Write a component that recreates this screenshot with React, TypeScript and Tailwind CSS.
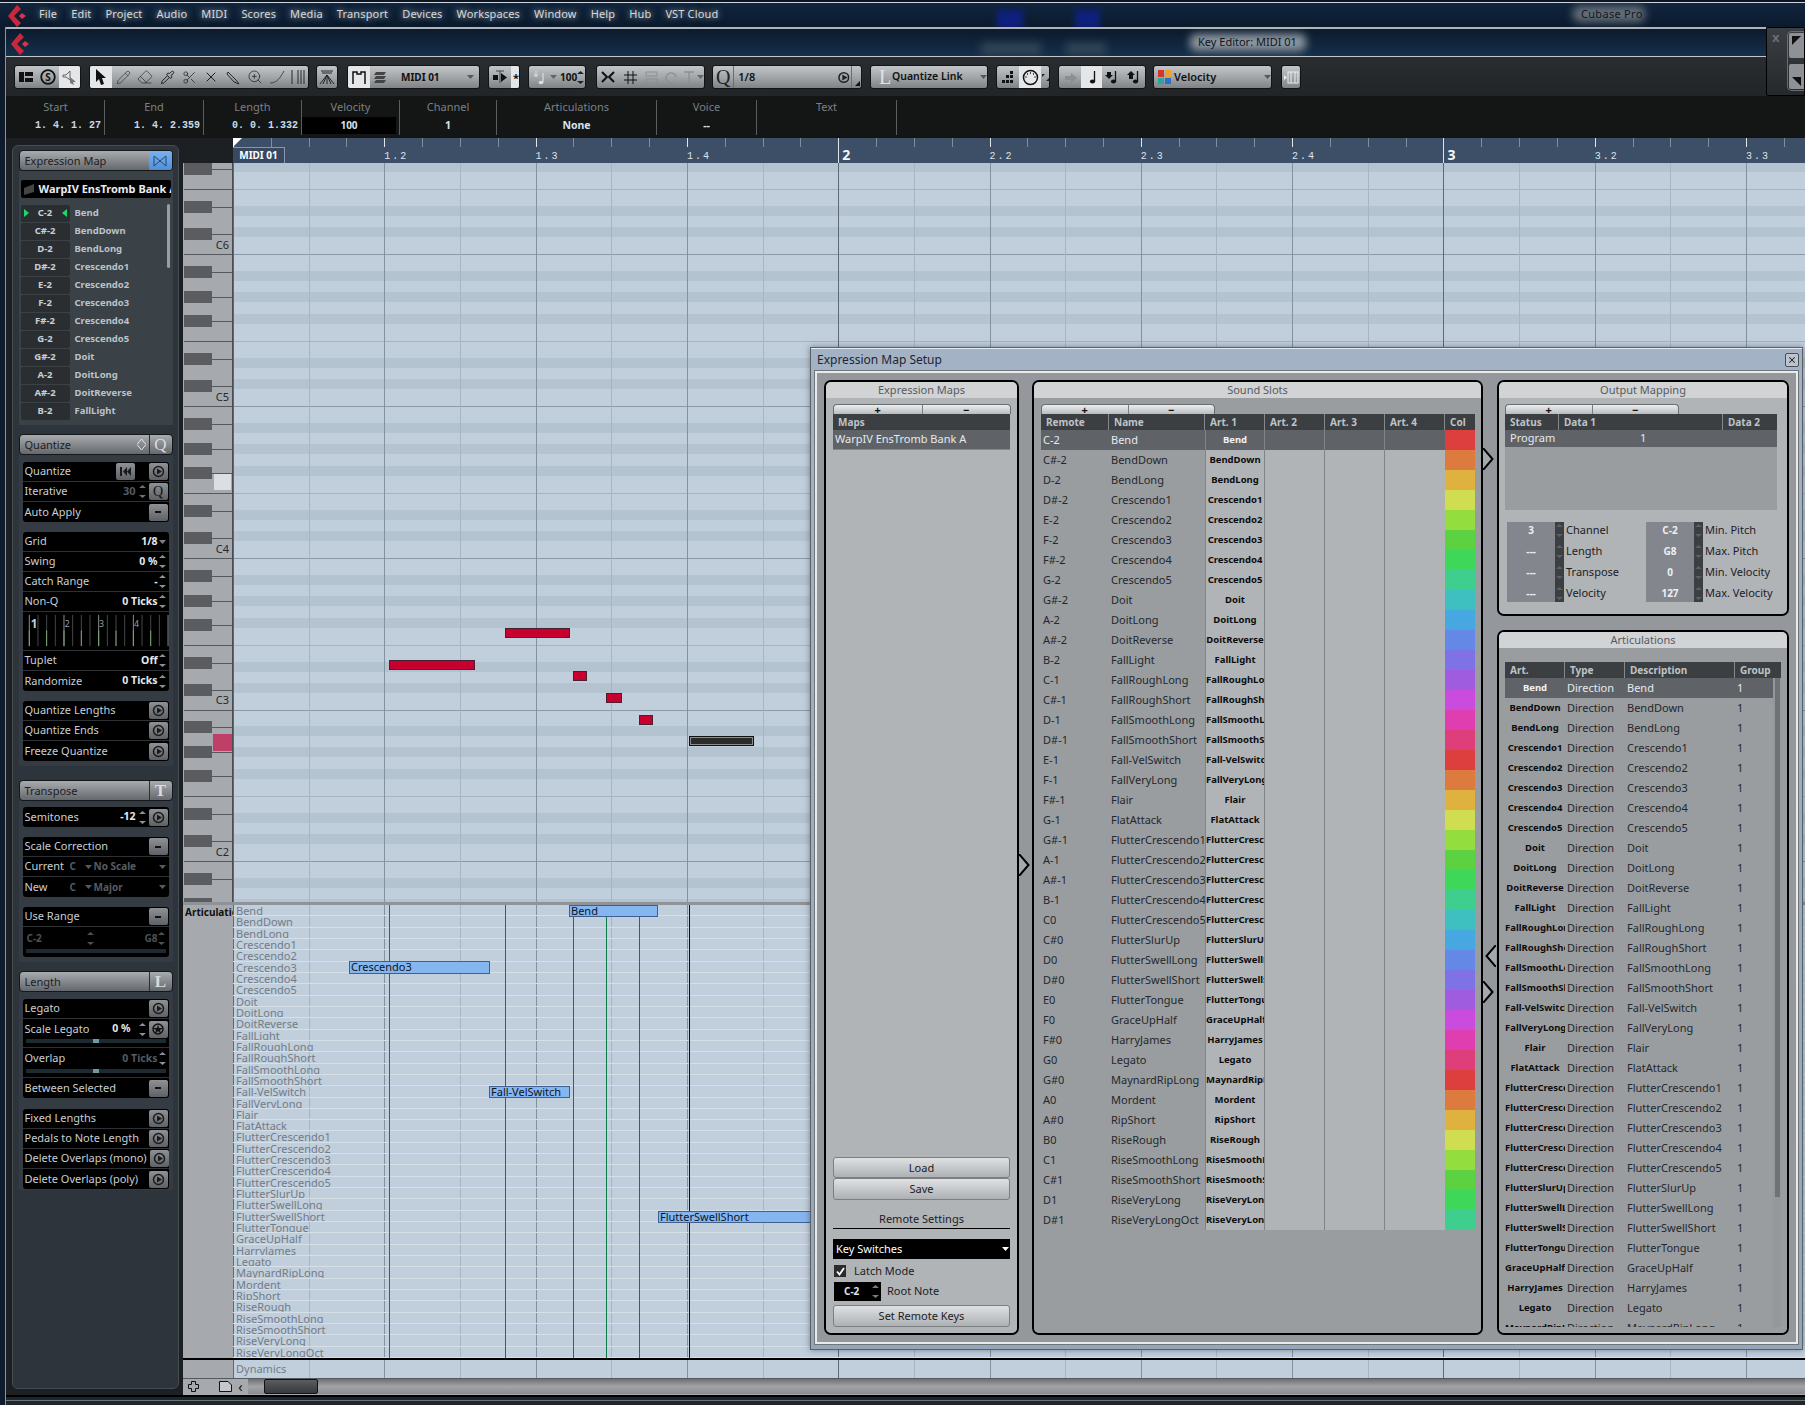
import type { ReactNode } from 'react'
import { Eraser, Pencil, Pipette, Scissors, X, ZoomIn } from 'lucide-react'

const NOTES = ['C', 'C#', 'D', 'D#', 'E', 'F', 'F#', 'G', 'G#', 'A', 'A#', 'B']
const REMOTES = Array.from({ length: 40 }, (_, i) => NOTES[i % 12] + (Math.floor(i / 12) - 2))

const SLOTS = [
  'Bend', 'BendDown', 'BendLong', 'Crescendo1', 'Crescendo2', 'Crescendo3', 'Crescendo4', 'Crescendo5',
  'Doit', 'DoitLong', 'DoitReverse', 'FallLight', 'FallRoughLong', 'FallRoughShort', 'FallSmoothLong',
  'FallSmoothShort', 'Fall-VelSwitch', 'FallVeryLong', 'Flair', 'FlatAttack', 'FlutterCrescendo1',
  'FlutterCrescendo2', 'FlutterCrescendo3', 'FlutterCrescendo4', 'FlutterCrescendo5', 'FlutterSlurUp',
  'FlutterSwellLong', 'FlutterSwellShort', 'FlutterTongue', 'GraceUpHalf', 'HarryJames', 'Legato',
  'MaynardRipLong', 'Mordent', 'RipShort', 'RiseRough', 'RiseSmoothLong', 'RiseSmoothShort', 'RiseVeryLong',
  'RiseVeryLongOct',
]

const COLORS = [
  '#dd3e3e', '#dd7a3e', '#dfb13f', '#d1dd50', '#93dd3e', '#5cd142', '#3ed75a', '#3ecf8e',
  '#3ec0c0', '#47a7e0', '#6488e5', '#7e72e6', '#a05cdf', '#c94cdf', '#de3eb0', '#de3e7a',
]

const MENU = ['File', 'Edit', 'Project', 'Audio', 'MIDI', 'Scores', 'Media', 'Transport', 'Devices', 'Workspaces', 'Window', 'Help', 'Hub', 'VST Cloud']
const C_LINES = [102.6, 254.3, 406, 557.8, 709.5, 861.3, 1013]
const STEP = 75.65

function Logo({ className }: { className: string }) {
  return (
    <svg className={className} width="20" height="22" viewBox="0 0 20 22">
      <path d="M9 0 L0 11 L9 22 L13 18 L6 11 L13 4 Z" fill="#c9283c" />
      <path d="M14 8 L18 11 L14 14 L11 11 Z" fill="#d8344a" />
    </svg>
  )
}

function MenuBar() {
  return (
    <div className="relative flex h-[27px] shrink-0 items-center overflow-hidden border-t-2 border-t-[#0b1524] bg-linear-to-b from-[#12263f] to-[#0b1a2d] shadow-[inset_0_1px_0_#cfd6dc]">
      <div className="absolute left-[997px] top-[8px] h-[19px] w-[26px] bg-[#0e2080] blur-[3px]" />
      <div className="absolute left-[1075px] top-[8px] h-[19px] w-[25px] bg-[#0e2080] blur-[3px]" />
      <Logo className="absolute left-[8px] top-[3px]" />
      <div className="relative flex pl-[39px] text-[11px] tracking-[0.15px] text-[#d5dade] [text-shadow:0_0_4px_#5f6973,0_0_7px_#5f6973,0_0_9px_#5f6973]">
        {MENU.map((item) => (
          <span key={item} className="mr-[14px]">{item}</span>
        ))}
      </div>
      <div className="absolute left-[1573px] top-[4px] h-[16px] w-[72px] rounded-[6px] bg-[#66707a] blur-[4px]" />
      <span className="absolute left-[1581px] text-[11px] tracking-[0.3px] text-[#11161b]">Cubase Pro</span>
    </div>
  )
}

function TitleBar() {
  return (
    <div className="relative h-[30px] shrink-0 overflow-hidden border-t-2 border-b border-t-[#aeb4ba] border-b-[#c2c6ca] bg-linear-to-b from-[#0c1a2c] to-[#15304b]">
      <div className="absolute left-[975px] top-[14px] h-[12px] w-[60px] bg-[#334658] blur-[4px]" />
      <div className="absolute left-[1060px] top-[14px] h-[12px] w-[40px] bg-[#334658] blur-[4px]" />
      <Logo className="absolute left-[5px] top-[4px]" />
      <div className="absolute left-[1184px] top-[5px] h-[17px] w-[116px] rounded-[6px] bg-[#8d97a1] blur-[4px]" />
      <span className="absolute left-[1192px] top-[5px] text-[11px] text-[#11161b]">Key Editor: MIDI 01</span>
    </div>
  )
}

function Group({ w, children }: { w: string; children: ReactNode }) {
  return <div className={`${w} flex h-[24px] shrink-0 items-center overflow-hidden rounded-[3px] border border-[#111315] bg-linear-to-b from-[#c2c5c8] via-[#a4a7aa] to-[#7f8286]`}>{children}</div>
}

function Slot({ w, on, children }: { w: string; on?: boolean; children?: ReactNode }) {
  return <span className={`${w} flex h-full shrink-0 items-center justify-center ${on ? 'bg-[#e4e6e8]' : ''}`}>{children}</span>
}

function Caret({ color = '#55585c' }: { color?: string }) {
  return (
    <svg width="7" height="4" viewBox="0 0 7 4" className="shrink-0">
      <path d="M0 0 L7 0 L3.5 4 Z" fill={color} />
    </svg>
  )
}

function NoteIcon({ arrow }: { arrow?: 'up' | 'down' }) {
  return (
    <svg width="16" height="16" viewBox="0 0 16 16">
      <path d="M10.5 2 V12.5" stroke="#111" strokeWidth="1.3" />
      <ellipse cx="8.5" cy="12.5" rx="2.6" ry="1.9" fill="#111" />
      {arrow === 'down' && <path d="M2 3 H6 V6 H8 L4 10 L0 6 H2 Z" fill="#111" />}
      {arrow === 'up' && <path d="M4 2 L8 6 H6 V10 H2 V6 H0 Z" fill="#111" />}
    </svg>
  )
}

function Toolbar() {
  const tool = 'text-[#26282a]'
  return (
    <div className="flex h-[39px] shrink-0 items-start bg-linear-to-b from-[#2a2d30] to-[#222528] pl-[8px] pt-[8px]">
      <div className="mr-[8px]"><Group w="w-[67px]">
        <Slot w="w-[22px]"><svg width="14" height="10" viewBox="0 0 14 10"><rect width="5" height="10" fill="#111" /><rect x="6" width="8" height="4" fill="#111" /><rect x="6" y="6" width="8" height="4" fill="#111" /></svg></Slot>
        <Slot w="w-[22px]"><svg width="16" height="16" viewBox="0 0 16 16"><circle cx="8" cy="8" r="6.8" fill="none" stroke="#111" strokeWidth="1.8" /><text x="8" y="11.5" textAnchor="middle" fontSize="10" fontWeight="700" fill="#111">S</text></svg></Slot>
        <Slot w="w-[22px]" on><svg width="16" height="16" viewBox="0 0 16 16"><path d="M1 6 H4 L8 2 V11 L4 8 H1 Z" fill="none" stroke="#666" /><path d="M8 8 L14 13 H11 L12 16 L8 14 Z" fill="#777" /></svg></Slot>
      </Group></div>
      <div className="mr-[7px]"><Group w="w-[220px]">
        <Slot w="w-[22px]" on><svg width="12" height="16" viewBox="0 0 12 16"><path d="M1 0 L11 9 H7 L9 15 L6 16 L4 10 L1 13 Z" fill="#111" /></svg></Slot>
        <Slot w="w-[22px]"><Pencil size={15} strokeWidth={1} className={tool} /></Slot>
        <Slot w="w-[22px]"><Eraser size={16} strokeWidth={1} className={tool} /></Slot>
        <Slot w="w-[22px]"><Pipette size={15} strokeWidth={1.4} className="text-[#111]" /></Slot>
        <Slot w="w-[22px]"><Scissors size={15} strokeWidth={1.2} className={tool} /></Slot>
        <Slot w="w-[22px]"><X size={16} strokeWidth={1.4} className="text-[#111]" /></Slot>
        <Slot w="w-[22px]"><svg width="15" height="15" viewBox="0 0 15 15"><path d="M2 2 L10 10 L13 14 L8 12 L1 4 Z" fill="none" stroke="#26282a" /></svg></Slot>
        <Slot w="w-[22px]"><ZoomIn size={16} strokeWidth={1.2} className={tool} /></Slot>
        <Slot w="w-[22px]"><svg width="16" height="14" viewBox="0 0 16 14"><path d="M1 13 C8 13 11 8 15 1" fill="none" stroke="#45484c" /></svg></Slot>
        <Slot w="w-[22px]"><svg width="16" height="14" viewBox="0 0 16 14"><path d="M1 0 V14 M7 0 V14 M10 0 V14 M13 0 V14" stroke="#26282a" /></svg></Slot>
      </Group></div>
      <div className="mr-[9px]"><Group w="w-[22px]">
        <Slot w="w-full"><svg width="16" height="15" viewBox="0 0 16 15"><path d="M2 1 H14 M3 3 H13" stroke="#222" /><path d="M8 5 L1 14 M8 5 L4 14 M8 5 V14 M8 5 L12 14 M8 5 L15 14" stroke="#222" /></svg></Slot>
      </Group></div>
      <div className="mr-[8px]"><Group w="w-[133px]">
        <Slot w="w-[22px]" on><svg width="14" height="13" viewBox="0 0 14 13"><path d="M1 13 V1 H5 V3 H9 V1 H13 V13" fill="none" stroke="#111" strokeWidth="1.5" /></svg></Slot>
        <Slot w="w-[20px]"><svg width="14" height="12" viewBox="0 0 14 12"><path d="M3 1 H13 L11 4 H1 Z M3 5 H13 L11 8 H1 Z M3 9 H13 L11 12 H1 Z" fill="#444" /></svg></Slot>
        <span className="ml-[11px] w-[66px] text-[10px] font-bold text-[#111]">MIDI 01</span>
        <Caret />
      </Group></div>
      <div className="mr-[8px]"><Group w="w-[32px]">
        <Slot w="w-[22px]"><svg width="16" height="16" viewBox="0 0 16 16"><path d="M4 2 H12 M8 2 V14" stroke="#444" /><rect x="1" y="6" width="5" height="5" fill="#111" /><path d="M9 4 L15 8.5 L9 13 Z" fill="#111" /></svg></Slot>
        <Slot w="w-[10px]" on><span className="text-[11px] font-bold leading-none text-[#111]">*</span></Slot>
      </Group></div>
      <div className="mr-[10px]"><Group w="w-[58px]">
        <Slot w="w-[21px]"><svg width="14" height="15" viewBox="0 0 14 15"><path d="M3 1 V6 M1 4 L3 7 L5 4" stroke="#d8dfe6" fill="none" /><path d="M10 3 V12" stroke="#d8dfe6" strokeWidth="1.2" /><ellipse cx="8" cy="12.5" rx="2.4" ry="1.8" fill="#d8dfe6" /></svg></Slot>
        <Caret color="#666" />
        <span className="ml-[3px] text-[10px] font-bold text-[#111]">100</span>
        <Spinner color="#222" />
      </Group></div>
      <div className="mr-[7px]"><Group w="w-[109px]">
        <Slot w="w-[22px]"><svg width="16" height="14" viewBox="0 0 16 14"><path d="M2 2 L7 7 L2 12 M14 2 L9 7 L14 12" fill="none" stroke="#111" strokeWidth="2" /></svg></Slot>
        <Slot w="w-[22px]"><svg width="13" height="13" viewBox="0 0 13 13"><path d="M4 0 V13 M9 0 V13 M0 4 H13 M0 9 H13" stroke="#111" /></svg></Slot>
        <Slot w="w-[20px]"><svg width="13" height="13" viewBox="0 0 13 13"><path d="M1 1 H12 V5 H1 Z M1 8 H12 V12 H1 Z" fill="none" stroke="#8c8f93" /></svg></Slot>
        <Slot w="w-[20px]"><svg width="13" height="13" viewBox="0 0 13 13"><path d="M11 6 A5 5 0 1 0 9 11" fill="none" stroke="#8c8f93" strokeWidth="1.4" /></svg></Slot>
        <Slot w="w-[16px]"><svg width="10" height="13" viewBox="0 0 10 13"><path d="M0 1 H10 M5 1 V13" stroke="#8c8f93" strokeWidth="1.4" /></svg></Slot>
        <Caret color="#666" />
      </Group></div>
      <div className="mr-[8px]"><Group w="w-[150px]">
        <span className="flex h-full w-[22px] items-center justify-center border-r border-[#6a6d70] font-['Liberation_Serif',serif] text-[20px] leading-none text-[#222]">Q</span>
        <span className="ml-[4px] w-[103px] text-[11px] font-semibold text-[#111]">1/8</span>
        <svg width="13" height="13" viewBox="0 0 13 13"><circle cx="6" cy="6.5" r="5" fill="none" stroke="#222" strokeWidth="1.6" /><path d="M4.5 3.5 L10 6.5 L4.5 9.5 Z" fill="#222" /></svg>
        <span className="ml-[1px] flex h-full w-[10px] items-end justify-end border-l border-[#6a6d70] pb-[2px] pr-[1px]"><span className="h-0 w-0 border-b-[5px] border-l-[5px] border-b-[#111] border-l-transparent" /></span>
      </Group></div>
      <div className="mr-[8px]"><Group w="w-[118px]">
        <span className="ml-[8px] w-[13px] font-['Liberation_Serif',serif] text-[20px] leading-none text-[#dfe3e6]">L</span>
        <span className="w-[88px] text-[10.5px] font-semibold text-[#111]">Quantize Link</span>
        <Caret />
      </Group></div>
      <div className="mr-[8px]"><Group w="w-[54px]">
        <Slot w="w-[22px]"><svg width="14" height="13" viewBox="0 0 14 13"><path d="M9 0 H12 V3 H9 Z M5 4 H8 V7 H5 Z M9 4 H12 V7 H9 Z M1 9 H4 V12 H1 Z M5 9 H8 V12 H5 Z M9 9 H12 V12 H9 Z" fill="#111" /></svg></Slot>
        <Slot w="w-[22px]" on><svg width="17" height="17" viewBox="0 0 17 17"><circle cx="8.5" cy="8.5" r="7" fill="none" stroke="#111" strokeWidth="1.5" /><path d="M3.5 8 h1 M5 5 h1 M8 4 h1 M11 5 h1 M12.5 8 h1" stroke="#111" strokeWidth="1.4" /></svg></Slot>
        <Slot w="w-[9px]"><svg width="7" height="7" viewBox="0 0 7 7"><path d="M0 0 L3 0 L0 3 Z M7 7 L4 7 L7 4 Z" fill="#222" /></svg></Slot>
      </Group></div>
      <div className="mr-[7px]"><Group w="w-[88px]">
        <Slot w="w-[22px]"><svg width="15" height="13" viewBox="0 0 15 13"><path d="M2 5 H8 V2 L14 7 L8 12 V9 H2 Z" fill="#8a8d91" /></svg></Slot>
        <Slot w="w-[21px]" on><NoteIcon /></Slot>
        <Slot w="w-[22px]"><NoteIcon arrow="down" /></Slot>
        <Slot w="w-[21px]"><NoteIcon arrow="up" /></Slot>
      </Group></div>
      <div className="mr-[9px]"><Group w="w-[119px]">
        <svg className="ml-[4px] mr-[3px]" width="13" height="14" viewBox="0 0 13 14"><rect width="6" height="7" fill="#d9332e" /><rect x="7" width="6" height="7" fill="#e9a22c" /><rect y="8" width="6" height="6" fill="#23a9a1" /><rect x="7" y="8" width="6" height="6" fill="#2a6fd0" /></svg>
        <span className="w-[90px] text-[11px] font-semibold text-[#111]">Velocity</span>
        <Caret />
      </Group></div>
      <Group w="w-[20px]">
        <Slot w="w-full"><svg width="15" height="13" viewBox="0 0 15 13"><path d="M0 4 L3 6.5 L0 9 Z" fill="#e8edf2" /><rect x="4" y="1" width="10" height="11" fill="none" stroke="#e8edf2" /><path d="M7 1 V12 M11 1 V12" stroke="#e8edf2" /></svg></Slot>
      </Group>
    </div>
  )
}

function InfoCol({ w, label, value, box, bold }: { w: string; label: string; value?: string; box?: boolean; bold?: boolean }) {
  return (
    <div className={`${w} mb-[3px] mt-[4px] flex flex-col border-r border-[#5a5e62]`}>
      <span className="text-center text-[11px] leading-[14px] text-[#7b8084]">{label}</span>
      {box ? (
        <span className="mr-[3px] mt-[3px] h-[17px] bg-black text-center text-[10px] font-bold leading-[17px] text-[#d6e2ec]">{value}</span>
      ) : bold ? (
        <span className="mt-[3px] text-center text-[10.5px] font-bold leading-[17px] text-[#d6e2ec]">{value}</span>
      ) : (
        <span className="mt-[3px] pr-[3px] text-right font-['Liberation_Mono',monospace] text-[10px] font-bold leading-[17px] text-[#c8dbe8]">{value}</span>
      )}
    </div>
  )
}

function InfoBar() {
  return (
    <div className="flex h-[42px] shrink-0 bg-[#141615] pl-[1px]">
      <InfoCol w="w-[98px]" label="Start" value="1. 4. 1. 27" />
      <InfoCol w="w-[99px]" label="End" value="1. 4. 2.359" />
      <InfoCol w="w-[98px]" label="Length" value="0. 0. 1.332" />
      <InfoCol w="w-[98px]" label="Velocity" value="100" box />
      <InfoCol w="w-[97px]" label="Channel" value="1" bold />
      <InfoCol w="w-[160px]" label="Articulations" value="None" bold />
      <InfoCol w="w-[100px]" label="Voice" value="--" bold />
      <InfoCol w="w-[140px]" label="Text" />
    </div>
  )
}

function Spinner({ color = '#8b9096' }: { color?: string }) {
  return (
    <svg width="7" height="13" viewBox="0 0 7 13" className="shrink-0">
      <path d="M3.5 0 L7 3 H0 Z M3.5 13 L7 10 H0 Z" fill={color} />
    </svg>
  )
}

function PlayIcon() {
  return (
    <svg width="13" height="13" viewBox="0 0 13 13">
      <circle cx="6.5" cy="6.5" r="5" fill="none" stroke="#1a1a1a" strokeWidth="1.5" />
      <path d="M5 3.5 L10 6.5 L5 9.5 Z" fill="#1a1a1a" />
    </svg>
  )
}

function Btn({ children }: { children?: ReactNode }) {
  return (
    <span className="ml-[3px] flex h-[17px] w-[19px] shrink-0 items-center justify-center rounded-[2px] bg-linear-to-b from-[#8f9295] to-[#5e6165]">
      {children ?? <PlayIcon />}
    </span>
  )
}

function Dash() {
  return <span className="h-[2px] w-[6px] bg-[#111]" />
}

function PanelHead({ title, children }: { title: string; children: ReactNode }) {
  return (
    <div className="flex h-[21px] shrink-0 items-center overflow-hidden rounded-[4px] border border-[#15181b] bg-linear-to-b from-[#a9acaf] to-[#65696d] text-[11px] text-[#1d2023]">
      <span className="flex-1 pl-[5px] pt-px">{title}</span>
      {children}
    </div>
  )
}

function HeadLetter({ children }: { children: ReactNode }) {
  return <span className="flex h-full w-[23px] items-center justify-center border-l border-[#2c2f32] font-['Liberation_Serif',serif] text-[17px] font-bold text-[#d9dbdd]">{children}</span>
}

function Section({ children }: { children: ReactNode }) {
  return <div className="mx-[2px] overflow-hidden rounded-[3px] bg-black text-[11px] text-[#c8ced4]">{children}</div>
}

function Row({ label, children }: { label: string; children?: ReactNode }) {
  return (
    <div className="flex h-5 items-center border-b border-[#2e3236] pl-[2px] pr-[1px] last:border-b-0">
      <span className="flex-1 whitespace-nowrap">{label}</span>
      {children}
    </div>
  )
}

function ValueRow({ label, value }: { label: string; value: string }) {
  return (
    <Row label={label}>
      <span className="mr-[1px] text-[10.5px] font-bold text-[#e4e8ec]">{value}</span>
      <Spinner />
      <span className="w-[2px]" />
    </Row>
  )
}

function Slider({ dim }: { dim?: boolean }) {
  return (
    <div className="mx-[3px] mb-[4px] flex h-[4px] justify-center bg-[#1d2a30]">
      {!dim && <span className="h-full w-[6px] bg-[#6c9aa5]" />}
    </div>
  )
}

function SwingGrid() {
  return (
    <svg className="block border-b border-[#2e3236]" width="149" height="39" viewBox="0 0 149 39">
      {Array.from({ length: 17 }, (_, i) => (
        <g key={i}>
          <rect x={4 + i * 8.9} y="3" width="1" height="32" fill={i % 4 === 0 ? '#8a9096' : '#44484c'} />
          {i % 2 === 0 && i < 16 && <rect x={4 + i * 8.9} y="19" width="1" height="16" fill="#79a875" />}
        </g>
      ))}
      <text x="6" y="16" fontSize="12" fontWeight="700" fill="#c8ced4">1</text>
      <text x="41" y="15" fontSize="9" fill="#9aa0a6">2</text>
      <text x="76" y="15" fontSize="9" fill="#9aa0a6">3</text>
      <text x="112" y="15" fontSize="9" fill="#9aa0a6">4</text>
    </svg>
  )
}

function LeftZone() {
  return (
    <div className="w-[177px] shrink-0 bg-[#1c2023] pl-[6px] pt-[7px]">
      <div className="flex h-[1244px] w-[167px] flex-col rounded-[6px] border border-[#454c54] bg-[#2d343c] px-[5.5px] pt-[4px]">
        <PanelHead title="Expression Map">
          <span className="flex h-full w-[23px] items-center justify-center bg-linear-to-b from-[#79b2ee] to-[#4f8fd9]">
            <svg width="14" height="12" viewBox="0 0 14 12"><path d="M1 1 L13 11 V1 L1 11 Z" fill="none" stroke="#29496f" /></svg>
          </span>
        </PanelHead>
        <div className="flex h-[254px] flex-col bg-[#3a4147] px-[2px] pt-[9px]">
          <div className="flex h-[18px] shrink-0 items-center overflow-hidden rounded-[2px] bg-black pl-[3px] text-[11px] font-bold whitespace-nowrap text-[#e8ecf0]">
            <svg className="mr-[5px] shrink-0" width="10" height="11" viewBox="0 0 10 11"><path d="M10 0 V8 L0 11 V4 Z" fill="#444" /></svg>
            WarpIV EnsTromb Bank A
          </div>
          <div className="relative mt-[6px] flex flex-col">
            {REMOTES.slice(0, 12).map((note, i) => (
              <div key={note} className="flex h-[18px] items-center text-[9.5px] font-bold text-[#bcc3ca]">
                <span className="relative flex h-[17px] w-[49px] items-center justify-center rounded-[2px] bg-[#2a2e31] text-[#c9cfd5]">
                  {i === 0 && <span className="absolute left-[3px] h-0 w-0 border-y-[4px] border-l-[5px] border-y-transparent border-l-[#1fd66a]" />}
                  {note}
                  {i === 0 && <span className="absolute right-[3px] h-0 w-0 border-y-[4px] border-r-[5px] border-y-transparent border-r-[#1fd66a]" />}
                </span>
                <span className="ml-[5px]">{SLOTS[i]}</span>
              </div>
            ))}
            <span className="absolute right-[1px] top-0 h-[64px] w-[3px] rounded-[2px] bg-[#989da2]" />
          </div>
        </div>
        <div className="mt-[9px]">
          <PanelHead title="Quantize">
            <svg className="mr-[3px]" width="9" height="11" viewBox="0 0 9 11"><path d="M4.5 0 L9 5.5 L4.5 11 L0 5.5 Z" fill="none" stroke="#e2e4e6" /></svg>
            <HeadLetter><span className="font-normal">Q</span></HeadLetter>
          </PanelHead>
        </div>
        <div className="flex h-[311px] flex-col gap-[10px] bg-[#343b42] px-[2px] pt-[7px]">
          <Section>
            <Row label="Quantize">
              <span className="mr-[11px]"><Btn><svg width="11" height="9" viewBox="0 0 11 9"><path d="M0 0 H2 V9 H0 Z M7 0 V9 L3 4.5 Z M11 0 V9 L7 4.5 Z" fill="#1a1a1a" /></svg></Btn></span>
              <Btn />
            </Row>
            <Row label="Iterative">
              <span className="mr-[3px] font-bold text-[#565b60]">30</span>
              <Spinner color="#6b7075" />
              <Btn><span className="font-['Liberation_Serif',serif] text-[14px] leading-none text-[#111]">Q</span></Btn>
            </Row>
            <Row label="Auto Apply"><Btn><Dash /></Btn></Row>
          </Section>
          <Section>
            <Row label="Grid">
              <span className="text-[10.5px] font-bold text-[#e4e8ec]">1/8</span>
              <span className="ml-[1px] mr-[2px]"><Caret color="#7b8085" /></span>
            </Row>
            <ValueRow label="Swing" value="0 %" />
            <ValueRow label="Catch Range" value="-" />
            <ValueRow label="Non-Q" value="0 Ticks" />
            <SwingGrid />
            <ValueRow label="Tuplet" value="Off" />
            <ValueRow label="Randomize" value="0 Ticks" />
          </Section>
          <Section>
            <Row label="Quantize Lengths"><Btn /></Row>
            <Row label="Quantize Ends"><Btn /></Row>
            <Row label="Freeze Quantize"><Btn /></Row>
          </Section>
        </div>
        <div className="mt-[14px]">
          <PanelHead title="Transpose"><HeadLetter>T</HeadLetter></PanelHead>
        </div>
        <div className="flex h-[161px] flex-col gap-[10px] bg-[#343b42] px-[2px] pt-[6px]">
          <Section>
            <Row label="Semitones">
              <span className="mr-[3px] text-[10.5px] font-bold text-[#e4e8ec]">-12</span>
              <Spinner />
              <Btn />
            </Row>
          </Section>
          <Section>
            <Row label="Scale Correction"><Btn><Dash /></Btn></Row>
            <div className="flex h-5 items-center border-b border-[#2e3236] pl-[2px] pr-[3px]">
              <span className="w-[45px]">Current</span>
              <span className="w-[15px] text-[10px] font-bold text-[#565b60]">C</span>
              <Caret color="#565b60" />
              <span className="ml-[2px] flex-1 text-[10px] font-bold text-[#565b60]">No Scale</span>
              <Caret color="#565b60" />
            </div>
            <div className="flex h-5 items-center pl-[2px] pr-[3px]">
              <span className="w-[45px]">New</span>
              <span className="w-[15px] text-[10px] font-bold text-[#565b60]">C</span>
              <Caret color="#565b60" />
              <span className="ml-[2px] flex-1 text-[10px] font-bold text-[#565b60]">Major</span>
              <Caret color="#565b60" />
            </div>
          </Section>
          <Section>
            <Row label="Use Range"><Btn><Dash /></Btn></Row>
            <div className="flex h-[22px] items-center px-[4px] text-[10px] font-bold text-[#4d5256]">
              <span className="w-[60px]">C-2</span>
              <Spinner color="#4d5256" />
              <span className="flex-1 text-right">G8</span>
              <Spinner color="#4d5256" />
            </div>
            <Slider dim />
          </Section>
        </div>
        <div className="mt-[9px]">
          <PanelHead title="Length"><HeadLetter>L</HeadLetter></PanelHead>
        </div>
        <div className="flex h-[198px] flex-col gap-[11px] bg-[#343b42] px-[2px] pt-[7px]">
          <Section>
            <Row label="Legato"><Btn /></Row>
            <div className="border-b border-[#2e3236]">
              <div className="flex h-5 items-center pl-[2px] pr-[1px]">
                <span className="flex-1">Scale Legato</span>
                <span className="mr-[8px] text-[10.5px] font-bold text-[#e4e8ec]">0 %</span>
                <Spinner />
                <Btn><svg width="12" height="12" viewBox="0 0 12 12"><circle cx="6" cy="6" r="5" fill="none" stroke="#111" strokeWidth="1.5" /><path d="M6 1 L7 5 L11 5 L8 7 L9 11 L6 8 L3 11 L4 7 L1 5 L5 5 Z" fill="#111" /></svg></Btn>
              </div>
              <Slider />
            </div>
            <div className="border-b border-[#2e3236]">
              <div className="flex h-[21px] items-center pl-[2px] pr-[3px]">
                <span className="flex-1">Overlap</span>
                <span className="mr-[1px] text-[10.5px] font-bold text-[#565b60]">0 Ticks</span>
                <Spinner />
              </div>
              <Slider />
            </div>
            <Row label="Between Selected"><Btn><Dash /></Btn></Row>
          </Section>
          <Section>
            <Row label="Fixed Lengths"><Btn /></Row>
            <Row label="Pedals to Note Length"><Btn /></Row>
            <Row label="Delete Overlaps (mono)"><Btn /></Row>
            <Row label="Delete Overlaps (poly)"><Btn /></Row>
          </Section>
        </div>
      </div>
    </div>
  )
}

function Ruler() {
  const ticks = Array.from({ length: 42 }, (_, i) => i)
  const labels: { x: number; text: string; bar?: boolean }[] = []
  for (let beat = 1; beat < 11; beat++) {
    const bar = Math.floor(beat / 4) + 1
    const sub = (beat % 4) + 1
    labels.push({ x: 233 + beat * 151.3, text: sub === 1 ? String(bar) : `${bar}.${sub}`, bar: sub === 1 })
  }
  return (
    <div className="relative h-[25px] flex-1 bg-[#3d4f66]">
      <svg className="absolute inset-0" width="1572" height="25" viewBox="233 138 1572 25" shapeRendering="crispEdges">
        {ticks.map((i) => {
          const x = Math.round(233 + i * 37.825)
          const beat = i % 4 === 0
          const bar = i % 16 === 0 && i > 0
          return <rect key={i} x={x} y="138" width="1" height={bar ? 25 : 9} fill={bar || beat ? '#dfe5ea' : '#7f8d9e'} />
        })}
      </svg>
      <svg className="absolute inset-0" width="1572" height="25" viewBox="233 138 1572 25">
        {labels.map((l) =>
          l.bar ? (
            <text key={l.text} x={l.x + 4} y="160" fontSize="14" fontWeight="700" fill="#f2f5f8">{l.text}</text>
          ) : (
            <text key={l.text} x={l.x} y="159" fontSize="10" letterSpacing="2" fontFamily="Liberation Mono, monospace" fill="#dbe3ea">{l.text}</text>
          )
        )}
      </svg>
      <span className="absolute left-0 top-0 h-0 w-0 border-r-[9px] border-t-[9px] border-r-transparent border-t-white" />
      <span className="absolute bottom-0 left-0 flex h-[16px] w-[52px] items-center justify-center border-r border-t border-[#8797a8] bg-[#374860] text-[10px] font-bold text-white">MIDI 01</span>
    </div>
  )
}

function Keyboard() {
  const black = [26, 53, 91, 115, 140]
  const mids = [20, 47, 85, 109, 134]
  return (
    <svg className="shrink-0 bg-[#a6a9ad]" width="49" height="739" viewBox="184 163 49 739" shapeRendering="crispEdges">
      {C_LINES.map((y) => (
        <g key={y}>
          {black.map((o) => <rect key={o} x="184" y={Math.round(y - o)} width="28" height="12" fill="#5a5c5f" />)}
          {mids.map((o) => <rect key={o} x="212" y={Math.round(y - o)} width="20" height="1" fill="#55585c" />)}
          <rect x="184" y={Math.round(y)} width="48" height="1" fill="#55585c" />
          <rect x="184" y={Math.round(y - 65)} width="48" height="1" fill="#55585c" />
        </g>
      ))}
      <rect x="232" y="163" width="1" height="739" fill="#4a4d50" />
      <rect x="214" y="474" width="17" height="16" fill="#dcdfe2" />
      <rect x="213" y="734" width="19" height="17" fill="#bf3f66" />
      {[['C6', 254], ['C5', 406], ['C4', 558], ['C3', 709], ['C2', 861]].map(([label, y]) => (
        <text key={label} x="229" y={Number(y) - 5} textAnchor="end" fontSize="11" fill="#26282b" shapeRendering="auto">{label}</text>
      ))}
    </svg>
  )
}

function VLines({ height }: { height: number }) {
  const lines = Array.from({ length: 21 }, (_, i) => i)
  return (
    <svg className="absolute left-0 top-0" width="1572" height={height} viewBox={`233 0 1572 ${height}`} shapeRendering="crispEdges">
      {lines.map((i) => {
        const color = i % 8 === 0 ? '#5b6979' : i % 2 === 0 ? '#8292a2' : '#a6b5c4'
        return <rect key={i} x={Math.round(233 + i * STEP)} y="0" width="1" height={height} fill={color} />
      })}
    </svg>
  )
}

function NoteGrid() {
  const dark = [27, 48, 92, 114, 135]
  const notes = [
    [505, 628, 65], [389, 660, 86], [573, 671, 14], [606, 693, 16], [639, 715, 14],
  ]
  return (
    <div className="relative h-[739px] flex-1 overflow-hidden bg-[#c1cedc]">
      <svg className="absolute inset-0" width="1572" height="739" viewBox="233 163 1572 739" shapeRendering="crispEdges">
        {C_LINES.map((y) => (
          <g key={y}>
            {dark.map((o) => <rect key={o} x="233" y={Math.round(y - o)} width="1572" height="10" fill="#b4c3d0" />)}
            <rect x="233" y={Math.round(y)} width="1572" height="1" fill="#8a99a9" />
            <rect x="233" y={Math.round(y - 65)} width="1572" height="1" fill="#a5b4c3" />
          </g>
        ))}
      </svg>
      <div className="absolute left-0 top-0"><VLines height={739} /></div>
      <svg className="absolute inset-0" width="1572" height="739" viewBox="233 163 1572 739" shapeRendering="crispEdges">
        {notes.map(([x, y, w]) => (
          <rect key={x} x={x + 0.5} y={y + 0.5} width={w - 1} height="9" fill="#c8002f" stroke="#4a2030" />
        ))}
        <rect x="689.5" y="736.5" width="64" height="9" fill="#2a2c2a" stroke="#111" />
        <rect x="690.5" y="737.5" width="62" height="7" fill="none" stroke="#8a8d8a" />
      </svg>
    </div>
  )
}

function Block({ className, label }: { className: string; label: string }) {
  return <span className={`${className} absolute overflow-hidden border border-[#3d5f92] bg-[#86b6f0] pl-[1px] text-[11px] leading-[10px] whitespace-nowrap text-[#0b1420]`}>{label}</span>
}

function Lane() {
  const events = [389, 505, 573, 606, 639]
  return (
    <div className="relative h-[453px] flex-1 overflow-hidden bg-[#c1cedc]">
      <VLines height={453} />
      <div className="absolute inset-0 grid grid-rows-[repeat(40,minmax(0,1fr))]">
        {SLOTS.map((name) => (
          <div key={name} className="overflow-hidden border-b border-[#d6dee6] pl-[3px] text-[11px] leading-[12px] text-[#717c87]">{name}</div>
        ))}
      </div>
      <svg className="absolute left-0 top-0" width="600" height="453" viewBox="233 0 600 453" shapeRendering="crispEdges">
        {events.map((x) => <rect key={x} x={x} y="0" width="1" height="453" fill="#0f7a4a" />)}
        <rect x="689" y="0" width="1" height="453" fill="#111" />
      </svg>
      <Block className="left-[336px] top-0 h-[12px] w-[89px]" label="Bend" />
      <Block className="left-[116px] top-[56px] h-[13px] w-[141px]" label="Crescendo3" />
      <Block className="left-[256px] top-[181px] h-[12px] w-[81px]" label="Fall-VelSwitch" />
      <Block className="left-[425px] top-[306px] h-[12px] w-[170px]" label="FlutterSwellShort" />
    </div>
  )
}

function Editor() {
  return (
    <div className="flex min-w-0 flex-1 flex-col bg-[#a6a9ad]">
      <div className="flex shrink-0">
        <div className="w-[50px] shrink-0 bg-[#1c2023]" />
        <Ruler />
      </div>
      <div className="flex shrink-0 pl-[1px]">
        <Keyboard />
        <NoteGrid />
      </div>
      <div className="h-[3px] shrink-0 bg-[#8f9296]" />
      <div className="flex shrink-0">
        <div className="h-[453px] w-[50px] shrink-0 overflow-hidden pl-[2px] text-[10px] font-bold whitespace-nowrap text-[#111]">Articulations</div>
        <Lane />
      </div>
      <div className="h-[2px] shrink-0 bg-black" />
      <div className="flex h-[18px] shrink-0">
        <div className="w-[50px] shrink-0" />
        <div className="relative flex-1 overflow-hidden bg-[#c1cedc]">
          <VLines height={18} />
          <span className="relative block pl-[3px] text-[11px] leading-[18px] text-[#717c87]">Dynamics</span>
        </div>
      </div>
      <div className="h-px shrink-0 bg-[#555a60]" />
      <div className="flex h-[15px] shrink-0">
        <div className="flex w-[50px] shrink-0 items-center justify-between pl-[5px] pr-[1px]">
          <svg width="11" height="11" viewBox="0 0 11 11"><path d="M3.5.5 H7.5 V3.5 H10.5 V7.5 H7.5 V10.5 H3.5 V7.5 H.5 V3.5 H3.5 Z" fill="none" stroke="#111" /></svg>
          <svg width="13" height="11" viewBox="0 0 13 11"><path d="M.5.5 H9 L12.5 4 V10.5 H.5 Z" fill="#c6c8cb" stroke="#111" /></svg>
        </div>
        <div className="flex flex-1 items-center bg-linear-to-b from-[#6e7073] via-[#a1a3a6] to-[#8a8c8f]">
          <span className="flex h-full w-[15px] items-center justify-center bg-[#a6a9ad] text-[14px] leading-none text-[#111]">‹</span>
          <span className="ml-[16px] h-full w-[54px] rounded-[2px] border border-[#111] bg-linear-to-b from-[#5a5d61] to-[#37393c]" />
        </div>
      </div>
    </div>
  )
}

function PlusMinus({ w }: { w: string }) {
  return (
    <div className={`${w} flex h-[10px] overflow-hidden rounded-t-[4px] border border-b-0 border-[#6b6e71] bg-linear-to-b from-[#eceded] to-[#b9bcbf] text-center text-[11px] font-bold leading-[9px] text-[#111]`}>
      <span className="flex-1 border-r border-[#7b7e81]">+</span>
      <span className="flex-1">−</span>
    </div>
  )
}

function Th({ children, last }: { children?: ReactNode; last?: boolean }) {
  return <span className={`${last ? '' : 'border-r border-[#85888b]'} overflow-hidden pl-[5px] text-[10px] font-bold leading-[16px] text-[#bfc3c7]`}>{children}</span>
}

function DlgPanel({ title, className, children }: { title: string; className: string; children: ReactNode }) {
  return (
    <div className={`${className} flex shrink-0 flex-col overflow-hidden rounded-[7px] border-2 border-black`}>
      <div className="h-[16px] shrink-0 bg-[#d2d3d4] text-center text-[11px] leading-[15px] text-[#555b61]">{title}</div>
      {children}
    </div>
  )
}

function DlgButton({ label, h }: { label: string; h: string }) {
  return <div className={`${h} flex items-center justify-center rounded-[3px] border border-[#7c7f82] bg-linear-to-b from-[#dfe1e3] to-[#aeb1b4] pt-px text-[11px] text-[#1c2024]`}>{label}</div>
}

function ExpressionMaps() {
  return (
    <DlgPanel title="Expression Maps" className="w-[195px]">
      <div className="flex flex-1 flex-col bg-[#b1b4b7] px-[7px] pb-[6px] pt-[6px]">
        <PlusMinus w="w-[178px]" />
        <div className="grid h-[16px] bg-[#3c3f42]"><Th last>Maps</Th></div>
        <div className="h-[20px] border-b border-[#85888b] bg-[#5f6367] pl-[2px] text-[11px] leading-[18px] text-[#e6eaee]">WarpIV EnsTromb Bank A</div>
        <div className="mt-auto flex flex-col">
          <DlgButton label="Load" h="h-[21px]" />
          <DlgButton label="Save" h="h-[22px]" />
          <div className="mt-[10px] border-b border-black pb-[1px] pt-[1px] text-center text-[11px] leading-[16px] text-[#1c2024]">Remote Settings</div>
          <div className="mt-[10px] flex h-[20px] items-center justify-between bg-black pl-[3px] pr-[1px] text-[11px] text-white">
            Key Switches
            <Caret color="#fff" />
          </div>
          <div className="mt-[6px] flex h-[12px] items-center pl-[1px] text-[11px] text-[#1c2024]">
            <span className="flex h-[12px] w-[12px] items-center justify-center bg-[#2a2c2e]">
              <svg width="9" height="9" viewBox="0 0 9 9"><path d="M1 4.5 L3.5 7.5 L8 1" fill="none" stroke="#fff" strokeWidth="1.8" /></svg>
            </span>
            <span className="ml-[8px]">Latch Mode</span>
          </div>
          <div className="mt-[5px] flex h-[19px] items-center pl-[1px] text-[11px] text-[#1c2024]">
            <span className="flex h-full w-[47px] items-center justify-between bg-black pl-[10px] pr-[2px] text-[10px] font-bold text-[#dfe3e6]">
              C-2
              <Spinner color="#777b7f" />
            </span>
            <span className="ml-[6px]">Root Note</span>
          </div>
          <div className="mt-[4px]"><DlgButton label="Set Remote Keys" h="h-[22px]" /></div>
        </div>
      </div>
    </DlgPanel>
  )
}

function SoundSlots() {
  const cols = 'grid grid-cols-[68px_96px_60px_60px_60px_60px_30px]'
  return (
    <DlgPanel title="Sound Slots" className="w-[451px]">
      <div className="flex flex-1 flex-col bg-[#9a9da0] pl-[7px] pt-[6px]">
        <PlusMinus w="w-[174px]" />
        <div className={`${cols} h-[16px] w-[434px] bg-[#3c3f42]`}>
          <Th>Remote</Th><Th>Name</Th><Th>Art. 1</Th><Th>Art. 2</Th><Th>Art. 3</Th><Th>Art. 4</Th><Th last>Col</Th>
        </div>
        {SLOTS.map((name, i) => (
          <div key={name} className={`${cols} h-5 w-[434px] text-[11px] leading-[19px] ${i === 0 ? 'bg-[#5f6367] text-[#e6eaee]' : 'text-[#23272b]'}`}>
            <span className="pl-[2px]">{REMOTES[i]}</span>
            <span className="overflow-hidden pl-[2px] whitespace-nowrap">{name}</span>
            <span className={`${i === 0 ? 'text-[#f0f2f4]' : 'bg-[#b1b4b7] text-[#0c0c0c]'} overflow-hidden border-x border-[#808387] text-center text-[9.5px] font-bold whitespace-nowrap`}>{name}</span>
            <span className={`${i === 0 ? '' : 'bg-[#b1b4b7]'} border-r border-[#808387]`} />
            <span className={`${i === 0 ? '' : 'bg-[#b1b4b7]'} border-r border-[#808387]`} />
            <span className={`${i === 0 ? '' : 'bg-[#b1b4b7]'}`} />
            <span style={{ backgroundColor: COLORS[i % 16] }} />
          </div>
        ))}
      </div>
    </DlgPanel>
  )
}

function Field({ value, label }: { value: string; label: string }) {
  return (
    <div className="flex h-[21px] items-center text-[#1c2024]">
      <span className="h-full w-[48px] bg-[#83878d] text-center text-[10px] font-bold leading-[21px] text-[#eceff1]">{value}</span>
      <span className="flex h-full w-[9px] items-center justify-center bg-[#3c3f42]"><Spinner color="#5c6064" /></span>
      <span className="ml-[2px] text-[11px]">{label}</span>
    </div>
  )
}

function OutputMapping() {
  return (
    <DlgPanel title="Output Mapping" className="h-[236px] w-[292px]">
      <div className="flex flex-1 flex-col bg-[#b1b4b7] px-[6px] pt-[6px]">
        <PlusMinus w="w-[174px]" />
        <div className="grid h-[16px] w-[272px] grid-cols-[54px_164px_54px] bg-[#3c3f42]">
          <Th>Status</Th><Th>Data 1</Th><Th last>Data 2</Th>
        </div>
        <div className="flex h-[17px] w-[272px] bg-[#5f6367] pl-[5px] text-[11px] leading-[16px] text-[#e6eaee]">
          <span className="w-[130px]">Program</span>
          <span>1</span>
        </div>
        <div className="h-[63px] w-[272px] bg-[#9a9da0]" />
        <div className="mt-[12px] h-[80px] overflow-hidden pl-[2px]">
          <div className="-mt-[2px] flex">
            <div className="w-[139px]">
              <Field value="3" label="Channel" />
              <Field value="---" label="Length" />
              <Field value="---" label="Transpose" />
              <Field value="---" label="Velocity" />
            </div>
            <div>
              <Field value="C-2" label="Min. Pitch" />
              <Field value="G8" label="Max. Pitch" />
              <Field value="0" label="Min. Velocity" />
              <Field value="127" label="Max. Velocity" />
            </div>
          </div>
        </div>
      </div>
    </DlgPanel>
  )
}

function Articulations() {
  const cols = 'grid grid-cols-[60px_60px_110px_38px]'
  return (
    <DlgPanel title="Articulations" className="h-[705px] w-[292px]">
      <div className="flex flex-1 flex-col overflow-hidden bg-[#9a9da0] px-[6px] pb-[6px] pt-[14px]">
        <div className="grid h-[16px] w-[276px] shrink-0 grid-cols-[60px_60px_110px_46px] bg-[#3c3f42]">
          <Th>Art.</Th><Th>Type</Th><Th>Description</Th><Th last>Group</Th>
        </div>
        <div className="relative flex-1 overflow-hidden">
          {SLOTS.slice(0, 33).map((name, i) => (
            <div key={name} className={`${cols} h-5 w-[268px] text-[11px] leading-[19px] ${i === 0 ? 'bg-[#5f6367] text-[#e6eaee]' : 'text-[#23272b]'}`}>
              <span className={`${i === 0 ? 'text-[#f0f2f4]' : 'text-[#0c0c0c]'} overflow-hidden text-center text-[9.5px] font-bold whitespace-nowrap`}>{name}</span>
              <span className="pl-[2px]">Direction</span>
              <span className="pl-[2px]">{name}</span>
              <span className="pl-[2px]">1</span>
            </div>
          ))}
          <span className="absolute right-0 top-0 h-full w-[8px] bg-[#95989b]" />
          <span className="absolute right-[1px] top-0 h-[519px] w-[5px] bg-[#6f7276]" />
        </div>
      </div>
    </DlgPanel>
  )
}

function Notch({ className, left }: { className: string; left?: boolean }) {
  return (
    <svg className={`${className} absolute`} width="11" height="22" viewBox="0 0 11 22">
      <path d={left ? 'M11 0 L1 11 L11 22 Z' : 'M0 0 L10 11 L0 22 Z'} fill="#a6a9ac" />
      <path d={left ? 'M11 0 L1.5 11 L11 22' : 'M0 0 L9.5 11 L0 22'} fill="none" stroke="#000" strokeWidth="2" />
    </svg>
  )
}

function SetupDialog() {
  return (
    <div className="absolute left-[810px] top-[347px] flex h-[1003px] w-[993px] flex-col border border-[#5a6066] bg-linear-to-b from-[#a3b3c5] to-[#94a6ba] shadow-[0_0_6px_rgba(40,50,60,0.5)]">
      <div className="flex h-[23px] shrink-0 items-center justify-between border-t border-[#e4e9ee] pl-[6px] pr-[3px]">
        <span className="text-[12px] text-[#1e2530]">Expression Map Setup</span>
        <span className="flex h-[14px] w-[14px] items-center justify-center rounded-[2px] border border-[#4a5058] bg-[#bcc5ce]">
          <X size={10} strokeWidth={2.5} className="text-[#222]" />
        </span>
      </div>
      <div className="relative mx-[4px] mb-[5px] flex flex-1 gap-[13px] border-2 border-[#e8eaec] bg-[#94989c] p-[7px] pr-[8px] outline outline-[#70757a]">
        <ExpressionMaps />
        <SoundSlots />
        <div className="ml-px flex flex-col gap-[14px]">
          <OutputMapping />
          <Articulations />
        </div>
        <Notch className="left-[202px] top-[481px]" />
        <Notch className="left-[666px] top-[75px]" />
        <Notch className="left-[668px] top-[572px]" left />
        <Notch className="left-[666px] top-[608px]" />
      </div>
    </div>
  )
}

export default function App() {
  return (
    <div className="relative flex h-[1405px] w-[1805px] flex-col overflow-hidden bg-[#0d1b2d] font-['Noto_Sans',sans-serif]">
      <MenuBar />
      <div className="ml-[5px] flex min-h-0 flex-1 flex-col border-l border-[#8d9399]">
        <TitleBar />
        <Toolbar />
        <InfoBar />
        <div className="flex min-h-0 flex-1">
          <LeftZone />
          <Editor />
        </div>
        <div className="h-[10px] shrink-0 border-t-2 border-black bg-[#1e262c] shadow-[inset_0_3px_0_#1e262c,inset_0_4px_0_#6b7278]" />
      </div>
      <div className="absolute left-[1766px] top-[27px] flex h-[69px] w-[39px] rounded-bl-[2px] border border-black bg-linear-to-b from-[#3b3e42] to-[#26292c]">
        <span className="w-[20px] pl-[5px] text-[13px] font-bold leading-[18px] text-[#6a6d70]">x</span>
        <div className="mt-[3px] flex h-[60px] flex-1 flex-col gap-[6px] rounded-l-[5px] border border-r-0 border-[#6a6d70] p-[1px] pr-0">
          <span className="flex h-[26px] items-start rounded-l-[2px] bg-[#8e9195] p-[3px]"><span className="h-0 w-0 border-r-[9px] border-t-[9px] border-r-transparent border-t-[#111]" /></span>
          <span className="flex h-[26px] items-end justify-end rounded-l-[2px] bg-[#8e9195] p-[3px]"><span className="h-0 w-0 border-l-[9px] border-t-[9px] border-l-transparent border-t-[#111]" /></span>
        </div>
      </div>
      <SetupDialog />
    </div>
  )
}
